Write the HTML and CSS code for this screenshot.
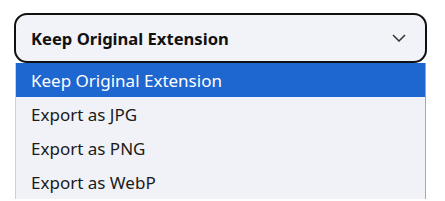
FILE: index.html
```html
<!doctype html>
<html>

<head>
  <title>Export format</title>
  <link rel="stylesheet" href="styles.css">
</head>

<body>
  <div class="picker">
    <div class="select">
      <span class="select-label">Keep Original Extension</span>
      <svg class="chevron" width="14" height="8" viewBox="0 0 14 8">
        <path d="M1 1 L7 7 L13 1" fill="none" stroke="#333" stroke-width="1.5" />
      </svg>
    </div>
    <ul class="options">
      <li class="option selected">Keep Original Extension</li>
      <li class="option">Export as JPG</li>
      <li class="option">Export as PNG</li>
      <li class="option">Export as WebP</li>
    </ul>
  </div>
</body>

</html>
```

FILE: styles.css
```css
html{
    background:#fff;
  }
  body{
    margin:0;
    padding:13px 18px 0 14px;
    font-family:"Noto Sans", "Open Sans", sans-serif;
    color:#1a1a1a;
  }
  .picker{
    width:413px;
  }
  .select{
    box-sizing:border-box;
    height:50px;
    border:2px solid #111;
    border-radius:13px;
    background:#f1f3f8;
    display:flex;
    align-items:center;
    justify-content:space-between;
    padding:0 19px 0 15px;
  }
  .select-label{
    font-weight:bold;
    font-size:16.6px;
    color:#111;
  }
  .options{
    list-style:none;
    margin:0 1px;
    padding:0;
    background:#f0f2f7;
    border-left:1px solid #d0d0d0;
    border-right:1px solid #a8a8a8;
  }
  .option{
    height:34px;
    line-height:36px;
    padding-left:15px;
    font-size:17px;
    color:#1a1a1a;
  }
  .selected{
    background:#1e66d0;
    color:#fff;
  }
```
